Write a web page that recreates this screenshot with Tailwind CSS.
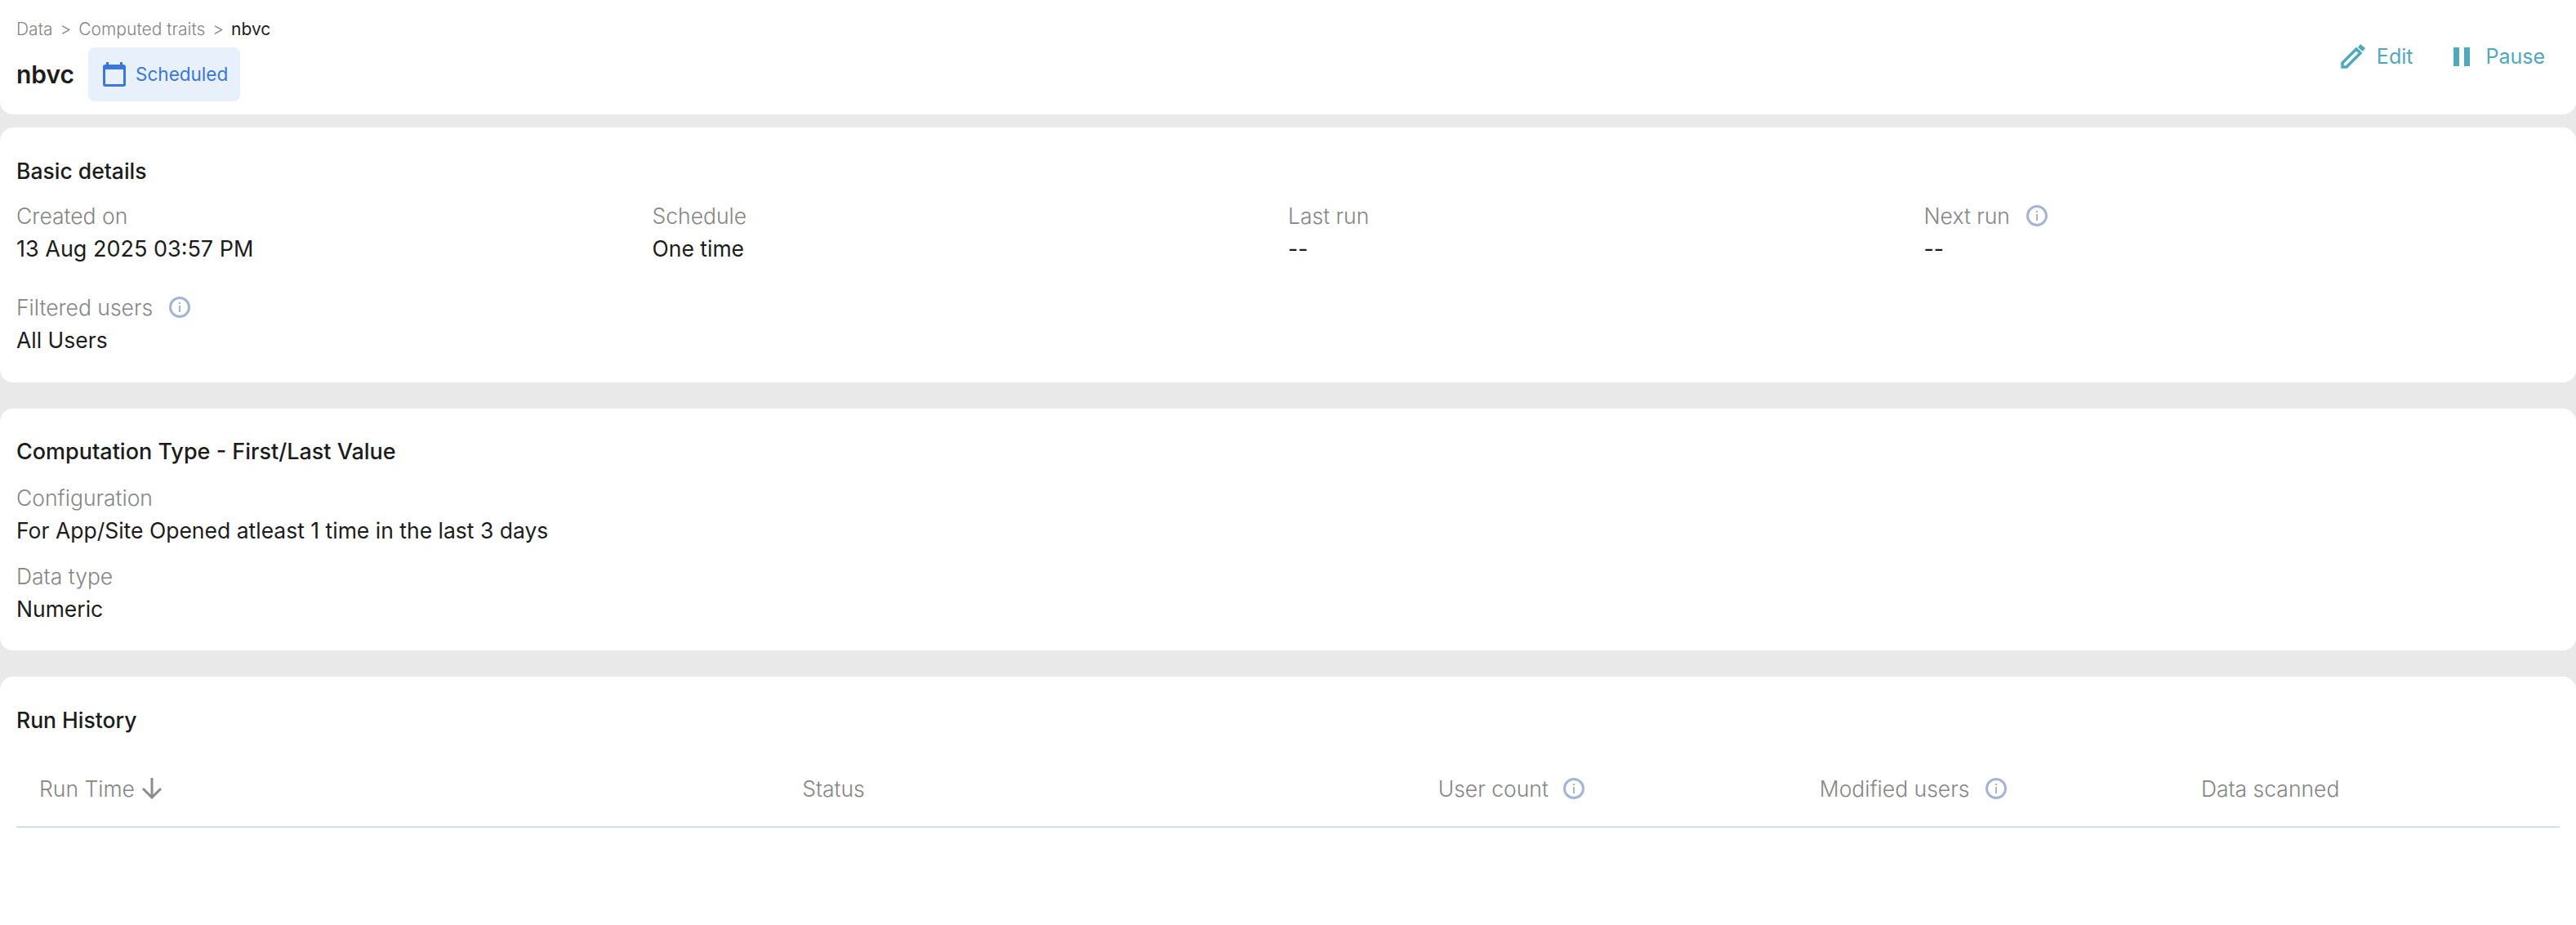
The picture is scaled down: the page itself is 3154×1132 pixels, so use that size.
<!DOCTYPE html>
<html lang="en">
<head>
    <meta charset="UTF-8">
    <title>nbvc - Computed traits</title>
    <script src="https://cdn.jsdelivr.net/npm/@tailwindcss/browser@4"></script>
</head>
<body class="bg-[#e9e9e9] font-['Inter',sans-serif] text-[#1c1c1c] text-[26.5px] leading-[40px] h-[1132px] overflow-hidden">
    <!-- Page header -->
    <header class="bg-white h-[140px] rounded-b-[16px] pl-[20px] pr-[38px] flex justify-between">
        <div>
            <nav class="flex items-center text-[21px] leading-[28px] text-[#858585] font-light pt-[22px]">
                <span>Data</span>
                <span class="mx-[9px]">&gt;</span>
                <span>Computed traits</span>
                <span class="mx-[9px]">&gt;</span>
                <span class="text-[#1c1c1c] font-normal">nbvc</span>
            </nav>
            <div class="flex items-center mt-[8px]">
                <h1 class="text-[30px] font-semibold">nbvc</h1>
                <div class="ml-[17px] h-[66px] w-[186px] rounded-[8px] bg-[#e8f0fb] text-[#3a76db] text-[22.5px] flex items-center pl-[18px] gap-[12px]">
                    <svg class="w-[28px] h-[30px]" viewBox="0 0 28 30" fill="none">
                        <path d="M4 0h3v3h14V0h3v3h1a3 3 0 0 1 3 3v21a3 3 0 0 1-3 3H3a3 3 0 0 1-3-3V6a3 3 0 0 1 3-3h1z" fill="#3a76db"/>
                        <rect x="3" y="9" width="22" height="18" fill="#e8f0fb"/>
                    </svg>
                    <span>Scheduled</span>
                </div>
            </div>
        </div>
        <div class="flex items-start pt-[49px] text-[#4fa8bb] text-[25px] leading-[40px]">
            <button class="flex items-center gap-[14px]">
                <svg class="w-[30px] h-[30px]" viewBox="0 0 30 30" fill="none">
                    <path d="M2 28v-5L19 6l5 5L7 28z" stroke="#4fa8bb" stroke-width="3.500"/>
                    <path d="M21 4l3-4 6 5-3 4z" fill="#4fa8bb"/>
                </svg>
                <span>Edit</span>
            </button>
            <button class="flex items-center gap-[19px] ml-[50px]">
                <svg class="w-[20px] h-[23px]" viewBox="0 0 20 23" fill="#4fa8bb">
                    <rect x="0" y="0" width="7" height="23"/>
                    <rect x="13" y="0" width="7" height="23"/>
                </svg>
                <span>Pause</span>
            </button>
        </div>
    </header>

    <!-- Basic details -->
    <section class="bg-white mt-[16px] h-[312px] rounded-[16px] px-[20px] pt-[33px]">
        <h2 class="font-medium">Basic details</h2>
        <div class="grid grid-cols-4 gap-y-[32px] mt-[15px]">
            <div>
                <div class="text-[#858585] font-light">Created on</div>
                <div class="text-[27px] pt-[1px] -mb-[1px]">13 Aug 2025 03:57 PM</div>
            </div>
            <div>
                <div class="text-[#858585] font-light">Schedule</div>
                <div>One time</div>
            </div>
            <div>
                <div class="text-[#858585] font-light">Last run</div>
                <div>--</div>
            </div>
            <div>
                <div class="text-[#858585] font-light flex items-center gap-[20px]">Next run
                    <svg class="w-[26px] h-[26px]" viewBox="0 0 26 26" fill="none">
                        <circle cx="13" cy="13" r="11.500" stroke="#a4b4d8" stroke-width="3"/>
                        <rect x="12" y="11" width="2" height="8" fill="#a4b4d8"/>
                        <rect x="12" y="7" width="2" height="2" fill="#a4b4d8"/>
                    </svg>
                </div>
                <div>--</div>
            </div>
            <div>
                <div class="text-[#858585] font-light flex items-center gap-[20px]">Filtered users
                    <svg class="w-[26px] h-[26px]" viewBox="0 0 26 26" fill="none">
                        <circle cx="13" cy="13" r="11.500" stroke="#a4b4d8" stroke-width="3"/>
                        <rect x="12" y="11" width="2" height="8" fill="#a4b4d8"/>
                        <rect x="12" y="7" width="2" height="2" fill="#a4b4d8"/>
                    </svg>
                </div>
                <div>All Users</div>
            </div>
        </div>
    </section>

    <!-- Computation type -->
    <section class="bg-white mt-[32px] h-[296px] rounded-[16px] px-[20px] pt-[33px]">
        <h2 class="font-medium text-[27px]">Computation Type - First/Last Value</h2>
        <div class="mt-[16px]">
            <div class="text-[#858585] font-light">Configuration</div>
            <div>For App/Site Opened atleast 1 time in the last 3 days</div>
        </div>
        <div class="mt-[16px]">
            <div class="text-[#858585] font-light">Data type</div>
            <div>Numeric</div>
        </div>
    </section>

    <!-- Run history -->
    <section class="bg-white mt-[32px] h-[304px] rounded-t-[16px] px-[20px] pt-[33px]">
        <h2 class="font-medium">Run History</h2>
        <div class="grid grid-cols-[30%_25%_15%_15%_15%] mt-[31px] h-[81px] pb-[14px] border-b-2 border-[#d9dcec] items-center text-[#858585] font-light">
            <div class="pl-[28px] flex items-center gap-[8px]">Run Time
                <svg class="w-[26px] h-[26px]" viewBox="0 0 26 26" fill="none" stroke="#8c8c8c" stroke-width="3">
                    <path d="M13 0v24M2 13l11 11 11-11"/>
                </svg>
            </div>
            <div class="pl-[28px]">Status</div>
            <div class="pl-[28px] flex items-center gap-[18px]">User count
                <svg class="w-[26px] h-[26px]" viewBox="0 0 26 26" fill="none">
                    <circle cx="13" cy="13" r="11.500" stroke="#a4b4d8" stroke-width="3"/>
                    <rect x="12" y="11" width="2" height="8" fill="#a4b4d8"/>
                    <rect x="12" y="7" width="2" height="2" fill="#a4b4d8"/>
                </svg>
            </div>
            <div class="pl-[28px] flex items-center gap-[20px]">Modified users
                <svg class="w-[26px] h-[26px]" viewBox="0 0 26 26" fill="none">
                    <circle cx="13" cy="13" r="11.500" stroke="#a4b4d8" stroke-width="3"/>
                    <rect x="12" y="11" width="2" height="8" fill="#a4b4d8"/>
                    <rect x="12" y="7" width="2" height="2" fill="#a4b4d8"/>
                </svg>
            </div>
            <div class="pl-[28px]">Data scanned</div>
        </div>
    </section>
</body>
</html>
